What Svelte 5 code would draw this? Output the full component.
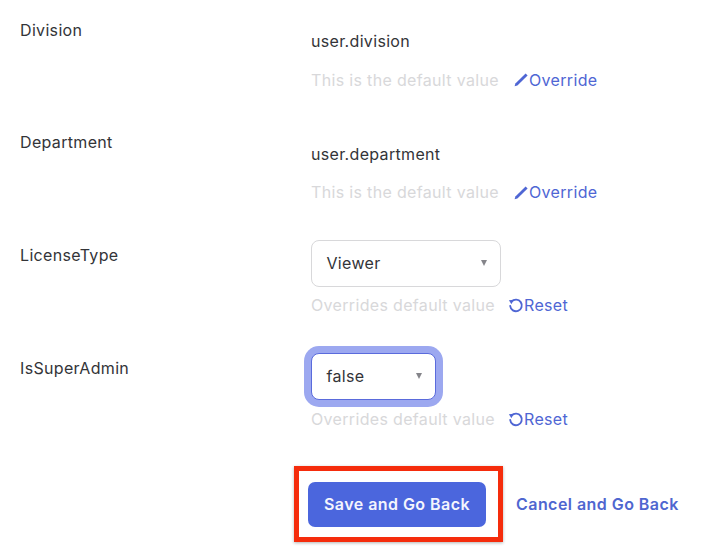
<script>
  const rows = [
    { label: 'Division', value: 'user.division', overridden: false },
    { label: 'Department', value: 'user.department', overridden: false },
    { label: 'LicenseType', value: 'Viewer', overridden: true, width: 190 },
    { label: 'IsSuperAdmin', value: 'false', overridden: true, width: 125, focused: true },
  ]
</script>

<main class="page">
  {#each rows as row}
    <section class="row">
      <div class="label">{row.label}</div>
      <div class="field">
        {#if row.overridden}
          <div class="select" class:focused={row.focused} style:width="{row.width}px">
            <span>{row.value}</span>
            <i class="caret"></i>
          </div>
          <div class="hint">
            <span class="hint-text tight">Overrides default value</span>
            <a class="link" href="#reset">
              <svg width="16" height="16" viewBox="0 0 16 16" fill="none">
                <path d="M3.6 4.6A5.8 5.8 0 1 1 2.2 9" stroke="currentColor" stroke-width="1.9" stroke-linecap="round" />
                <path d="M0.9 3.2 L5.6 2.8 L3.4 7.2 Z" fill="currentColor" />
              </svg>Reset
            </a>
          </div>
        {:else}
          <div class="value">{row.value}</div>
          <div class="hint">
            <span class="hint-text">This is the default value</span>
            <a class="link" href="#override">
              <svg width="15" height="15" viewBox="0 0 15 15" fill="none">
                <path d="M0.6 14.2 L1.4 11.6 L11.6 1.6 L13.6 3.6 L3.4 13.4 Z" fill="currentColor" />
              </svg>Override
            </a>
          </div>
        {/if}
      </div>
    </section>
  {/each}

  <div class="actions">
    <div class="callout">
      <button type="button" class="save">Save and Go Back</button>
    </div>
    <a class="cancel" href="#cancel">Cancel and Go Back</a>
  </div>
</main>

<style>
  :global(body) {
    margin: 0;
    background: #fff;
  }

  .page {
    width: 717px;
    height: 555px;
    overflow: hidden;
    box-sizing: border-box;
    padding-top: 20px;
    font-family: Inter, "Liberation Sans", sans-serif;
    font-size: 16px;
    letter-spacing: 0.33px;
    color: #333438;
  }

  .row {
    display: flex;
    height: 112.7px;
    padding-left: 20px;
  }

  .label {
    width: 291px;
    flex-shrink: 0;
    margin-top: -0.5px;
    line-height: 20px;
  }

  .field {
    display: flex;
    flex-direction: column;
    align-items: flex-start;
  }

  .value {
    margin-top: 11px;
    line-height: 20px;
  }

  .select {
    display: flex;
    align-items: center;
    justify-content: space-between;
    box-sizing: border-box;
    height: 47px;
    margin-top: -5.4px;
    padding: 0 13px 0 14.5px;
    border: 1.5px solid #d8d8da;
    border-radius: 8px;
    background: #fff;
  }

  .select.focused {
    margin-bottom: 1px;
    border-color: #5a6bdc;
    box-shadow: 0 0 0 7px #9ca8f0;
  }

  .caret {
    width: 0;
    height: 0;
    border-left: 3.5px solid transparent;
    border-right: 3.5px solid transparent;
    border-top: 6px solid #85858a;
  }

  .hint {
    display: flex;
    align-items: center;
    margin-top: 8px;
    line-height: 20px;
  }

  .value + .hint {
    margin-top: 18.5px;
  }

  .hint-text {
    width: 203px;
    color: #d8d8da;
  }

  .hint-text.tight {
    width: 197px;
  }

  .link {
    display: flex;
    align-items: center;
    color: #4f66d4;
    text-decoration: none;
  }

  .actions {
    display: flex;
    align-items: center;
    gap: 13px;
    margin: -4.8px 0 0 294px;
  }

  .callout {
    padding: 11px 12px 10px 9px;
    border: 5px solid #f52c0c;
    box-shadow: 0 1px 3px rgba(0, 0, 0, 0.3);
  }

  .save {
    display: block;
    width: 178px;
    height: 45px;
    padding: 0;
    border: 0;
    border-radius: 7px;
    background: #4b66dd;
    color: #f4f5fd;
    font: 600 16px Inter, "Liberation Sans", sans-serif;
    letter-spacing: 0.45px;
  }

  .cancel {
    color: #4f66d0;
    font-weight: 600;
    letter-spacing: 0.45px;
    text-decoration: none;
  }
</style>
